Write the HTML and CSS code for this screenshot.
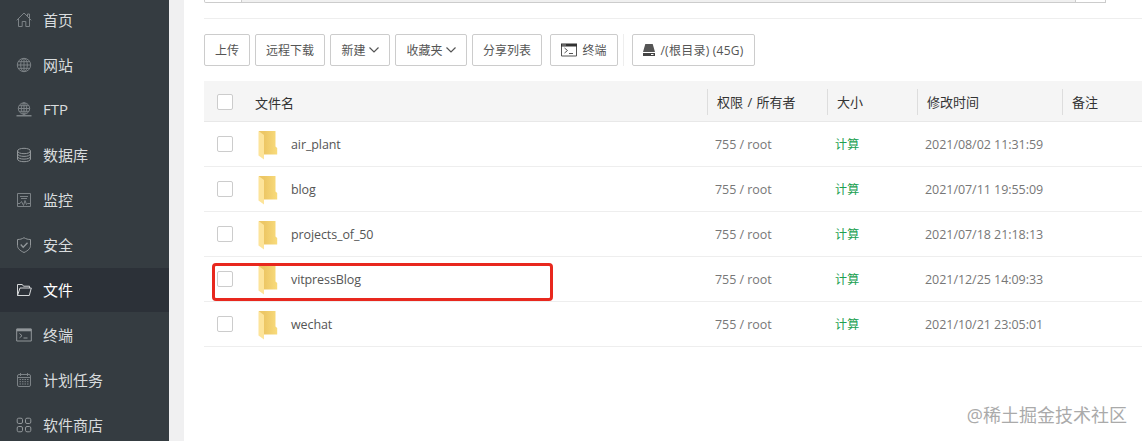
FILE: index.html
```html
<!DOCTYPE html>
<html lang="zh-CN">

<head>
    <meta charset="UTF-8">
    <title>文件</title>
    <link rel="stylesheet" href="styles.css">
</head>

<body>
    <svg class="defs" width="0" height="0">
        <linearGradient id="back">
            <stop offset="0.300" stop-color="#edc765"/>
            <stop offset="1" stop-color="#f8db7c"/>
        </linearGradient>
        <symbol id="folder" viewBox="0 0 20 30">
            <path d="M1 1h16.500v15.500l1.700 1.500v6.500H1z" fill="url(#back)"/>
            <path d="M0.500 1l5.500 4v24.500l-5.500-4z" fill="#fde49a"/>
        </symbol>
        <symbol id="arrow" viewBox="0 0 10 6">
            <path d="M0.500 0.500L5 5l4.500-4.500" fill="none" stroke="#555" stroke-width="1.200"/>
        </symbol>
    </svg>

    <div class="layout">
        <ul class="menu">
            <li>
                <svg viewBox="0 0 16 16"><path d="M0.700 8.300L8 1l7.300 7.300M2.500 6.800v7.700h3.700V9.500h3.600v5h3.700V6.800M11.500 4V2h2v4"/></svg>
                <span>首页</span>
            </li>
            <li>
                <svg viewBox="0 0 16 16"><circle cx="8" cy="8" r="6.700"/><ellipse cx="8" cy="8" rx="3.300" ry="6.700"/><path d="M8 1.300v13.400M1.300 8h13.400M2.300 4.700h11.400M2.300 11.300h11.400"/></svg>
                <span>网站</span>
            </li>
            <li>
                <svg viewBox="0 0 16 16"><circle cx="8" cy="6.500" r="5.700"/><ellipse cx="8" cy="6.500" rx="2.700" ry="5.700"/><path d="M8 0.800v13M2.300 6.500h11.400M3 3.700h10M3 9.300h10"/><path d="M0.500 13.700h15M6 13.700h4" stroke-width="1.600"/></svg>
                <span>FTP</span>
            </li>
            <li>
                <svg class="strong" viewBox="0 0 16 16"><ellipse cx="8" cy="4" rx="6.500" ry="2.700"/><path d="M1.500 4v8c0 3.600 13 3.600 13 0V4M1.500 6.700c0 3.600 13 3.600 13 0M1.500 9.400c0 3.600 13 3.600 13 0"/></svg>
                <span>数据库</span>
            </li>
            <li>
                <svg viewBox="0 0 16 16"><path d="M1.500 1.500h13v13h-13zM4 4.500h8M5 6.500h6M2 11.500h2l1.500-2 2 4 1.500-5 1.500 4 1-1h2.500"/></svg>
                <span>监控</span>
            </li>
            <li>
                <svg class="strong" viewBox="0 0 16 16"><path d="M8 0.700c2 1.300 4 1.800 6.500 1.800v6c0 3-2.500 5.200-6.500 7-4-1.800-6.500-4-6.500-7v-6C4 2.500 6 2 8 0.700z"/><path d="M4.700 7.500l2.500 2.700 4.300-4.400" stroke-width="1.300"/></svg>
                <span>安全</span>
            </li>
            <li class="active">
                <svg viewBox="0 0 16 16"><path d="M1.500 13.500v-11h4.800l1.200 1.700h6V6M1.500 13.500L4 6h11.300l-2 7.500z"/></svg>
                <span>文件</span>
            </li>
            <li>
                <svg class="strong" viewBox="0 0 16 16"><path d="M0.700 2h14.600v12H0.700zM3.500 6.500L6 8.700l-2.500 2.200M7.500 11h4"/><path d="M0.700 3h14.600" stroke-width="2.600"/></svg>
                <span>终端</span>
            </li>
            <li>
                <svg viewBox="0 0 16 16"><rect x="1.500" y="2.500" width="13" height="12" rx="1.500"/><path d="M4.500 1v3M11.500 1v3M1.500 5.500h13"/><path d="M3.500 7.500h9M3.500 9.700h9M3.500 12h9" stroke-dasharray="1.500 1"/></svg>
                <span>计划任务</span>
            </li>
            <li>
                <svg class="strong" viewBox="0 0 16 16"><rect x="1.200" y="1.200" width="5.300" height="5.300" rx="1.500"/><rect x="9.500" y="1.200" width="5.300" height="5.300" rx="1.500"/><rect x="1.200" y="9.500" width="5.300" height="5.300" rx="1.500"/><rect x="9.500" y="9.500" width="5.300" height="5.300" rx="1.500"/></svg>
                <span>软件商店</span>
            </li>
        </ul>

        <div class="main">
            <div class="path-bar">
                <div class="back"></div>
                <div class="path"></div>
                <div class="refresh"></div>
            </div>

            <div class="toolbar">
                <button class="w46">上传</button>
                <button class="w70">远程下载</button>
                <button class="w60">新建<svg class="arrow"><use href="#arrow"/></svg></button>
                <button class="w72">收藏夹<svg class="arrow"><use href="#arrow"/></svg></button>
                <button class="w70">分享列表</button>
                <button class="terminal">
                    <svg width="16" height="14" viewBox="0 0 16 14"><path d="M0.500 1v12h15V1M3.500 5l3 2.500-3 2.500M8 10.500h4" fill="none" stroke="#555"/><path d="M0 0.500h16v3H0z" fill="#333"/><path d="M1.500 2h3" stroke="#fff" stroke-dasharray="1 1"/></svg>
                    终端
                </button>
                <div class="split"></div>
                <button class="disk">
                    <svg width="12" height="12" viewBox="0 0 12 12"><path d="M2.300 0h7.400L12 8H0z" fill="#555"/><path d="M0 9h12v3H0z" fill="#444"/><path d="M8 10.500h2.500" stroke="#fff"/></svg>
                    /(根目录) (45G)
                </button>
            </div>

            <table class="files">
                <thead>
                    <tr>
                        <th class="col-check"><i class="check"></i></th>
                        <th class="col-name">文件名</th>
                        <th class="col-auth"><span>权限 / 所有者</span></th>
                        <th class="col-size"><span>大小</span></th>
                        <th class="col-time"><span>修改时间</span></th>
                        <th><span>备注</span></th>
                    </tr>
                </thead>
                <tbody>
                    <tr>
                        <td><i class="check"></i></td>
                        <td><div class="name"><svg><use href="#folder"/></svg>air_plant</div></td>
                        <td>755 / root</td>
                        <td class="calc">计算</td>
                        <td>2021/08/02 11:31:59</td>
                        <td></td>
                    </tr>
                    <tr>
                        <td><i class="check"></i></td>
                        <td><div class="name"><svg><use href="#folder"/></svg>blog</div></td>
                        <td>755 / root</td>
                        <td class="calc">计算</td>
                        <td>2021/07/11 19:55:09</td>
                        <td></td>
                    </tr>
                    <tr>
                        <td><i class="check"></i></td>
                        <td><div class="name"><svg><use href="#folder"/></svg>projects_of_50</div></td>
                        <td>755 / root</td>
                        <td class="calc">计算</td>
                        <td>2021/07/18 21:18:13</td>
                        <td></td>
                    </tr>
                    <tr>
                        <td><i class="check"></i></td>
                        <td><div class="name"><svg><use href="#folder"/></svg>vitpressBlog</div></td>
                        <td>755 / root</td>
                        <td class="calc">计算</td>
                        <td>2021/12/25 14:09:33</td>
                        <td></td>
                    </tr>
                    <tr>
                        <td><i class="check"></i></td>
                        <td><div class="name"><svg><use href="#folder"/></svg>wechat</div></td>
                        <td>755 / root</td>
                        <td class="calc">计算</td>
                        <td>2021/10/21 23:05:01</td>
                        <td></td>
                    </tr>
                </tbody>
            </table>
        </div>
    </div>

    <div class="mark"></div>
    <div class="watermark">@稀土掘金技术社区</div>
</body>

</html>
```
FILE: styles.css
```css
* {
    box-sizing: border-box;
}

body {
    margin: 0;
    height: 441px;
    overflow: hidden;
    position: relative;
    background-color: #f0f0f1;
    font-family: "Open Sans", "Noto Sans CJK SC", sans-serif;
    font-size: 12px;
    color: #555;
}

.defs {
    position: absolute;
}

.layout {
    display: flex;
    height: 441px;
}

.menu {
    width: 169px;
    margin: 0;
    padding: 0;
    overflow: hidden;
    list-style: none;
    background-color: #353c41;
    flex-shrink: 0;
}

.menu li {
    display: flex;
    align-items: center;
    gap: 11px;
    height: 44px;
    margin-bottom: 1px;
    padding-left: 16px;
    font-size: 15px;
    color: #d9dcde;
}

.menu li:first-child {
    margin-top: -2px;
}

.menu span {
    padding-bottom: 2px;
}

.menu svg {
    width: 16px;
    height: 16px;
    fill: none;
    stroke: #7c8286;
    stroke-width: 1;
}

.menu .strong {
    stroke: #92979a;
}

.menu .active {
    background-color: #2c3138;
    color: #fff;
}

.menu .active svg {
    stroke: #d5d7d9;
}

.main {
    flex: 1;
    margin-left: 15px;
    padding-left: 20px;
    background-color: #fff;
    overflow: hidden;
}

.path-bar {
    display: flex;
    height: 19px;
    border-bottom: 1px solid #eee;
}

.path-bar div {
    height: 3px;
    border: 1px solid #ccc;
    border-top: none;
}

.path-bar .back {
    width: 38px;
    border-bottom-left-radius: 2px;
}

.path-bar .path {
    width: 834px;
    border-left: none;
    background-color: #f0f0f0;
}

.path-bar .refresh {
    width: 30px;
    border-left: none;
}

.toolbar {
    display: flex;
    gap: 5px;
    height: 62px;
    padding-top: 15px;
}

button {
    display: flex;
    align-items: center;
    justify-content: center;
    height: 32px;
    padding: 0;
    border: 1px solid #ccc;
    border-radius: 2px;
    background-color: #fff;
    color: #555;
    font-family: inherit;
    font-size: 12px;
    white-space: nowrap;
}

.w46 {
    width: 46px;
}

.w60 {
    width: 60px;
}

.w70 {
    width: 70px;
}

.w72 {
    width: 72px;
}

.arrow {
    width: 10px;
    height: 6px;
    margin: 0 0 1px 3px;
}

.terminal {
    width: 68px;
    margin-left: 3px;
    gap: 5px;
}

.split {
    width: 1px;
    height: 32px;
    background-color: #eee;
}

.disk {
    width: 123px;
    margin-left: 3px;
    gap: 5px;
    letter-spacing: 0.250px;
}

.files {
    width: 938px;
    table-layout: fixed;
    border-collapse: separate;
    border-spacing: 0;
}

th,
td {
    padding: 0 0 0 8px;
    text-align: left;
    font-weight: normal;
}

th {
    height: 41px;
    padding-left: 0;
    padding-top: 2px;
    background-color: #f5f5f5;
    border-bottom: 1px solid #e8e8e8;
    font-size: 13px;
    color: #333;
}

th span {
    display: block;
    height: 26px;
    line-height: 26px;
    padding-left: 9px;
    border-left: 1px solid #ddd;
    word-spacing: 1px;
}

td {
    height: 45px;
    border-bottom: 1px solid #eee;
    font-size: 12.500px;
    letter-spacing: -0.050px;
    color: #777;
}

th:first-child,
td:first-child {
    padding-left: 13px;
}

td:nth-child(2) {
    padding-left: 3px;
}

.col-check {
    width: 51px;
}

.col-name {
    width: 452px;
}

.col-auth {
    width: 120px;
}

.col-size {
    width: 90px;
}

.col-time {
    width: 145px;
}

.check {
    display: block;
    width: 16px;
    height: 16px;
    border: 1px solid #ccc;
    border-radius: 2px;
    background-color: #fff;
}

.name {
    display: flex;
    align-items: center;
    gap: 13px;
    letter-spacing: -0.100px;
    color: #555;
}

.name svg {
    width: 20px;
    height: 30px;
    margin-top: 2px;
}

td.calc {
    font-size: 12px;
    letter-spacing: 0.300px;
    color: #20a050;
}

/* red frame over the vitpressBlog row */
.mark {
    position: absolute;
    left: 212px;
    top: 263px;
    width: 341px;
    height: 38px;
    border: 3px solid #e8281e;
    border-radius: 4px;
}

.watermark {
    position: absolute;
    right: 15px;
    bottom: 13px;
    font-size: 18px;
    line-height: 26px;
    color: #aaa;
}
```
